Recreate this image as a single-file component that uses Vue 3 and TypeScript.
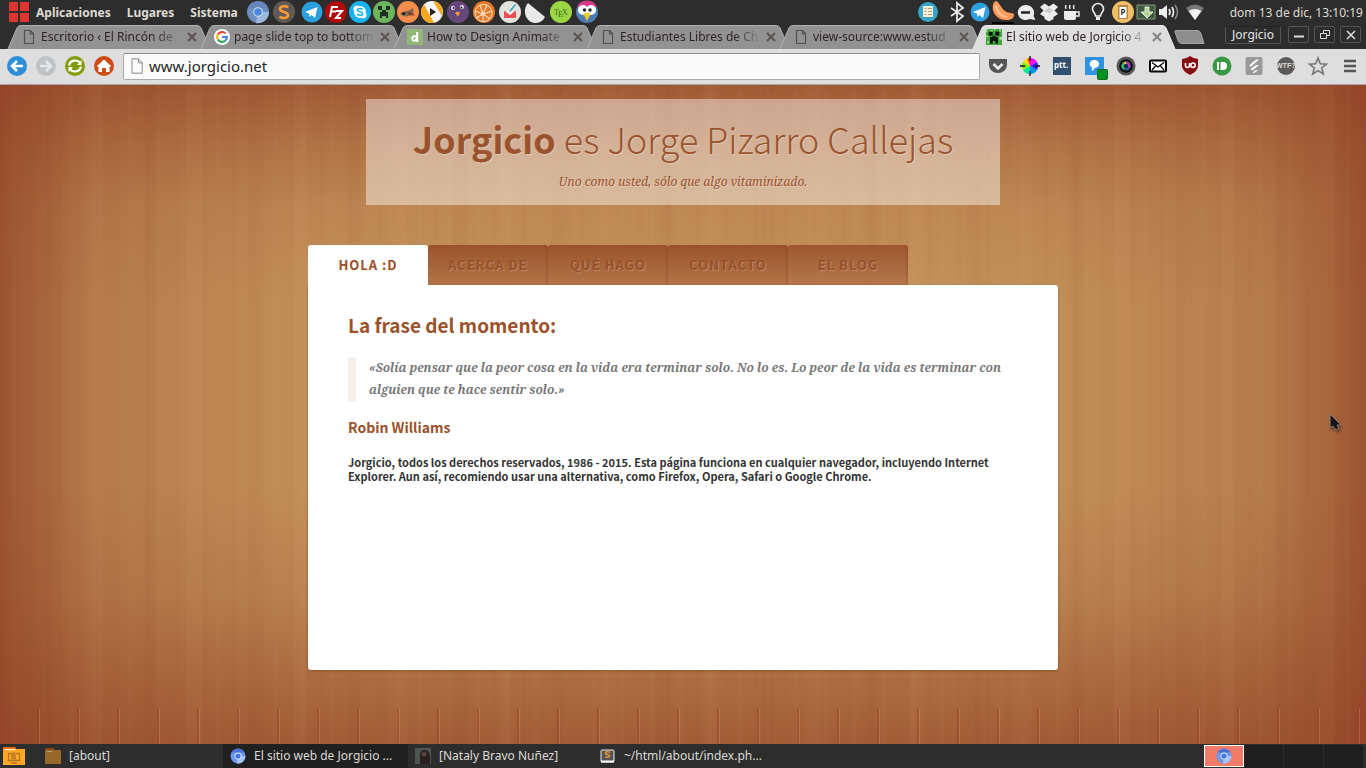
<script setup lang="ts">
import { ref } from 'vue'

interface BrowserTab {
  title: string
  icon: 'page' | 'google' | 'green' | 'creeper'
}

const tabs: BrowserTab[] = [
  { title: 'Escritorio ‹ El Rincón de', icon: 'page' },
  { title: 'page slide top to bottom', icon: 'google' },
  { title: 'How to Design Animate', icon: 'green' },
  { title: 'Estudiantes Libres de Ch', icon: 'page' },
  { title: 'view-source:www.estud', icon: 'page' },
  { title: 'El sitio web de Jorgicio 4', icon: 'creeper' },
]
const activeTab = ref(5)
const address = ref('www.jorgicio.net')

const sections = ['Hola :D', 'Acerca de', 'Qué hago', 'Contacto', 'El blog']
const activeSection = ref(0)

const creeperCells: [number, number, number, number][] = [
  [2, 2, 3, 3], [7, 2, 3, 3], [5, 5, 2, 3], [3, 6, 6, 3], [3, 9, 2, 2], [7, 9, 2, 2],
]
</script>

<template>
  <div class="desktop">
    <header class="panel-bar">
      <nav class="menus" aria-label="Sistema">
        <svg class="logo" viewBox="0 0 20 20"><path fill="#df3430" d="M0 0h9v9H0zM11 0h9v9h-9zM0 11h9v9H0zM11 11h9v9h-9z" /></svg>
        <button type="button">Aplicaciones</button>
        <button type="button">Lugares</button>
        <button type="button">Sistema</button>
      </nav>
      <div class="icons spaced first">
        <button type="button" aria-label="Chromium"><svg viewBox="0 0 24 24"><circle cx="12" cy="12" r="11" fill="#6d8fc0" /><path d="M12 12h11A11 11 0 0 1 10 23z" fill="#9db8de" /><path d="M2 8A11 11 0 0 1 22 8H12z" fill="#6486ba" /><circle cx="12" cy="12" r="4.800" fill="#d3e0f2" /><circle cx="12" cy="12" r="3.800" fill="#4a88dc" /></svg></button>
        <button type="button" aria-label="Sublime"><svg viewBox="0 0 24 24"><circle cx="12" cy="12" r="11" fill="#605a54" /><path d="M16 7.500C14 5.500 8 5.500 8 9s8 2.500 8 6-6 3.800-8.500 1.500" fill="none" stroke="#f79a35" stroke-width="2.600" /></svg></button>
      </div>
      <div class="icons">
        <button type="button" aria-label="Telegram"><svg viewBox="0 0 24 24"><circle cx="12" cy="12" r="10.500" fill="#2ba0dc" /><path d="M5 12 17.500 7 15 18l-3.500-3-2 2-.5-3.500z" fill="#fff" /></svg></button>
        <button type="button" aria-label="FileZilla"><svg viewBox="0 0 24 24"><circle cx="12" cy="12" r="11" fill="#b00a0a" /><path d="M6 17 8 7h6M7 11.500h5M12 11h6l-6 7h5" fill="none" stroke="#fff" stroke-width="2" /></svg></button>
        <button type="button" aria-label="Skype"><svg viewBox="0 0 24 24"><circle cx="12" cy="12" r="11" fill="#12b4ef" /><circle cx="12" cy="12" r="6" fill="#fff" /><circle cx="9" cy="9" r="3.500" fill="#fff" /><circle cx="15" cy="15" r="3.500" fill="#fff" /><path d="M14.500 9.500c-1-1.500-5-1.500-5 .6s5 1.400 5 3.600-4 2.200-5.300.3" fill="none" stroke="#12b4ef" stroke-width="1.600" /></svg></button>
        <button type="button" aria-label="Minecraft"><svg viewBox="0 0 24 24"><circle cx="12" cy="12" r="11" fill="#6ab55d" /><path d="M6 6h4v4H6zM14 6h4v4h-4zM10 10h4v2h2v6h-2v-2h-4v2H8v-6h2z" fill="#20301e" /></svg></button>
        <button type="button" aria-label="GIMP"><svg viewBox="0 0 24 24"><circle cx="12" cy="12" r="11" fill="#f48c4c" /><path d="M4 13c3 1 5-3 8-2l5-3c1 3 1 7-4 8-4 1-8 0-9-3z" fill="#7d6650" /><circle cx="7.500" cy="13.500" r="1.600" fill="#222" /><path d="m12 13 6 2" stroke="#8b2b12" stroke-width="1.500" /></svg></button>
        <button type="button" aria-label="Reproductor"><svg viewBox="0 0 24 24"><circle cx="12" cy="12" r="11" fill="#f6f6f6" /><path d="M4 4.500A11 11 0 0 0 14 22.800zM13 1a11 11 0 0 1 9 15z" fill="#f6a61b" /><path d="M10 8v8l6-4z" fill="#222" /></svg></button>
      </div>
      <div class="icons spaced third">
        <button type="button" aria-label="Pidgin"><svg viewBox="0 0 24 24"><circle cx="12" cy="12" r="11" fill="#65477c" /><circle cx="7" cy="8" r="2" fill="#eee" /><circle cx="16" cy="7" r="2" fill="#eee" /><circle cx="7.500" cy="8" r="1" fill="#222" /><circle cx="15.500" cy="7.500" r="1" fill="#222" /><path d="M9 13q3-3 5 0l-2 3.500z" fill="#f19a3e" /></svg></button>
        <button type="button" aria-label="Clementine"><svg viewBox="0 0 24 24"><circle cx="12" cy="12" r="11" fill="#e97825" /><circle cx="11.500" cy="13" r="8.600" fill="none" stroke="#f8e2cb" /><path d="m11 14-3-9m3 9 4-9m-4 9 9-3m-9 3 7 5m-7-5v8m0-8-7 4m7-4-8-3" stroke="#f8e2cb" stroke-width="1.200" /></svg></button>
        <button type="button" aria-label="Correo"><svg viewBox="0 0 24 24"><circle cx="12" cy="12" r="11" fill="#e3e2db" /><path d="M6 11h12v7H6z" fill="#ee4f55" /><path d="m7 11 5 4 5-4z" fill="#fff" /><path d="m11 13 1-3 5-6 1 1-5 6z" fill="#2a9acb" /></svg></button>
      </div>
      <div class="icons spaced">
        <button type="button" aria-label="Inkscape"><svg viewBox="0 0 24 24"><path d="M5 3 22 17a11 11 0 0 1-10 6C2 22-1 10 5 3z" fill="#e9e9e9" /></svg></button>
        <button type="button" aria-label="TeX"><svg viewBox="0 0 24 24"><circle cx="12" cy="12" r="11" fill="#9ad743" /><text x="5" y="15" font-size="8" fill="#41631c" font-family="Liberation Serif">T</text><text x="9" y="17" font-size="8" fill="#41631c" font-family="Liberation Serif">E</text><text x="13" y="15" font-size="8" fill="#41631c" font-family="Liberation Serif">X</text></svg></button>
        <button type="button" aria-label="Pájaro"><svg viewBox="0 0 24 24"><circle cx="12" cy="12" r="11" fill="#4a7db5" /><path d="M2 7a11 11 0 0 1 20 0z" fill="#d8398a" /><circle cx="8" cy="10" r="5" fill="#fff" /><circle cx="16" cy="10" r="5" fill="#fff" /><circle cx="9.500" cy="10" r="1.700" fill="#222" /><circle cx="15" cy="10" r="1.700" fill="#222" /><path d="M8.500 14q3.500-3 7 0L12 21z" fill="#f5cf1d" /></svg></button>
      </div>
      <div class="icons tray">
        <button type="button" class="first-tray" aria-label="Notas"><svg viewBox="0 0 24 24"><circle cx="12" cy="12" r="10" fill="#36a5c8" /><path d="M7 6h10v11H7z" fill="#f9f0dc" /><path d="M8.500 8.500h2m1.500 0h4m-7.500 3h2m1.500 0h4m-7.500 3h2m1.500 0h4" stroke="#c19b71" /></svg></button>
        <button type="button" aria-label="Bluetooth"><svg viewBox="0 0 24 24"><path d="m6 8 12 8-6 5V3l6 5-12 8" fill="none" stroke="#e8e8e8" stroke-width="1.800" /></svg></button>
        <button type="button" aria-label="Telegram"><svg viewBox="0 0 24 24"><circle cx="12" cy="12" r="9.500" fill="#2ba0dc" /><path d="M5 12 17.500 7 15 18l-3.500-3-2 2-.5-3.500z" fill="#fff" /></svg></button>
        <button type="button" aria-label="Clementine"><svg viewBox="0 0 24 24"><path d="M5 1c-2 0-4 4-3 9s6 10 13 10c5 0 8-2 8-5s-5-1-9-4S8 2 5 1z" fill="#ff9a5c" /><path d="M5 5c0 6 4 11 11 12" stroke="#ffc49d" stroke-width="2" fill="none" /><path d="M1 23h22" stroke="#000" stroke-width="2" /></svg></button>
        <button type="button" aria-label="Mensajes"><svg viewBox="0 0 24 24"><path d="M11.500 5a7.800 7.500 0 1 0 4 14l6 1-2-4a8 8 0 0 0-8-11z" fill="#ededed" /><path d="M7 12.500h9" stroke="#222" stroke-width="2.500" /></svg></button>
        <button type="button" aria-label="Dropbox"><svg viewBox="0 0 24 24"><path d="m7.500 3.500 4.500 3 4.500-3L21 7l-3.500 3.500L21 14l-4.500 3v2L12 21.500 7.500 19v-2L3 14l3.500-3.500L3 7z" fill="#ededed" /><path d="m7 10.500 5-3 5 3-5 3z" fill="#2d2d2d" opacity=".15" /></svg></button>
        <button type="button" aria-label="Cafeína"><svg viewBox="0 0 24 24"><path d="M4 11h12v7q0 2-2 2H6q-2 0-2-2z" fill="#ededed" /><path d="M16 12h3v4h-3M6 9q-1-2 0-4m4 4q-1-2 0-4m4 4q-1-2 0-4" stroke="#ededed" stroke-width="1.500" fill="none" /></svg></button>
        <button type="button" class="wide" aria-label="Bombilla"><svg viewBox="0 0 24 24"><path d="M9.500 16c0-3-3-4-3-7a5.500 5.500 0 0 1 11 0c0 3-3 4-3 7z" fill="none" stroke="#ededed" stroke-width="1.600" /><path d="M10 17h4v3h-4z" fill="#ededed" /></svg></button>
        <button type="button" aria-label="Portapapeles"><svg viewBox="0 0 24 24"><circle cx="12" cy="12" r="11" fill="#f0bf66" /><path d="M7 5h10v14H7z" fill="#b8864a" /><path d="M8.500 7h7v11h-7z" fill="#fff" /><text x="9.500" y="15" font-size="8" font-weight="bold" fill="#333" font-family="Noto Sans">P</text></svg></button>
        <button type="button" aria-label="Descargas"><svg viewBox="0 0 24 24"><path d="M3 5h18v14H3z" fill="#3c5a40" stroke="#87977f" /><path d="M11 7h4v5h4l-6 6-6-6h4z" fill="#b7d28e" stroke="#fff" stroke-width=".8" /></svg></button>
        <button type="button" aria-label="Volumen"><svg viewBox="0 0 24 24"><path d="M2 9h3l5-4v14l-5-4H2z" fill="#ededed" /><path d="M12 9q2 3 0 6M15 7q3 5 0 10" stroke="#ededed" stroke-width="1.700" fill="none" /><path d="M18 5q5 7 0 14" stroke="#888" stroke-width="1.500" fill="none" /></svg></button>
        <button type="button" class="wide" aria-label="Red"><svg viewBox="0 0 24 24"><path d="M3 8q9-7 18 0l-9 12z" fill="#777" /><path d="M5.500 11q6.500-4 13 0L12 20z" fill="#f2f2f2" /></svg></button>
      </div>
      <time class="clock">dom 13 de dic, 13:10:19</time>
    </header>

    <div class="tab-strip">
      <div class="tabs" role="tablist">
        <div v-for="(tab, i) in tabs" :key="tab.title" class="tab" :class="{ active: i === activeTab }">
          <svg class="tab-shape" viewBox="0 0 204 24" preserveAspectRatio="none"><path d="M0 24 9 3q1-2.500 4-2.500h177q3 0 4 2.500l9 21" /></svg>
          <button class="tab-main" type="button" role="tab" :aria-selected="i === activeTab" @click="activeTab = i">
            <svg v-if="tab.icon === 'page'" class="favicon" viewBox="0 0 16 16"><path d="M3.500 1.500h6l3 3v10h-9zM9.500 1.500v3.500h3" fill="none" stroke="#55504f" stroke-width="1.200" /></svg>
            <svg v-else-if="tab.icon === 'google'" class="favicon" viewBox="0 0 16 16"><circle cx="8" cy="8" r="8" fill="#fff" /><g fill="none" stroke-width="2.200"><path d="M11.500 4.300A5 5 0 0 0 3.800 5.500" stroke="#ea4335" /><path d="M3.800 5.500a5 5 0 0 0 0 5" stroke="#fbbc05" /><path d="M3.800 10.500a5 5 0 0 0 7.500 1.200" stroke="#34a853" /><path d="M11.300 11.700A5 5 0 0 0 13 8H8" stroke="#4285f4" /></g></svg>
            <svg v-else-if="tab.icon === 'green'" class="favicon" viewBox="0 0 16 16"><path d="M0 0h16v16H0z" fill="#92b878" /><circle cx="7.500" cy="9.500" r="2.200" fill="none" stroke="#fff" stroke-width="1.900" /><path d="M10.200 3v10" stroke="#fff" stroke-width="2" /></svg>
            <svg v-else class="favicon" viewBox="0 0 12 12"><path d="M0 0h12v12H0z" fill="#3fa83b" /><path d="M0 0h1v2H0zM3 1h2v1H3zM10 0h1v2h-1zM0 5h2v1H0zM10 6h2v2h-2zM1 9h1v2H1zM6 0h1v1H6z" fill="#a5e59a" /><rect v-for="c in creeperCells" :key="c.join()" :x="c[0]" :y="c[1]" :width="c[2]" :height="c[3]" fill="#0d160c" /></svg>
            <span class="tab-title">{{ tab.title }}</span>
          </button>
          <button class="tab-close" type="button" aria-label="Cerrar pestaña"><svg viewBox="0 0 10 10"><path d="m1 1 8 8M9 1 1 9" /></svg></button>
        </div>
        <button class="new-tab" type="button" aria-label="Nueva pestaña"><svg viewBox="0 0 30 14"><path d="M2 .5h21q3 0 4 3l3 10H8q-3 0-4-3L1 2Q.5.5 2 .5z" fill="#8e8e8e" stroke="#a5a5a5" /></svg></button>
      </div>
      <div class="window-controls">
        <button class="profile" type="button">Jorgicio</button>
        <button type="button" aria-label="Minimizar"><svg viewBox="0 0 18 14"><path d="M4 8.500h10" stroke-width="2" /></svg></button>
        <button type="button" aria-label="Restaurar"><svg viewBox="0 0 18 14"><path d="M4.500 5.500h6v5h-6zM7.500 5V2.500h6v5H11" /></svg></button>
        <button type="button" aria-label="Cerrar"><svg viewBox="0 0 18 14"><path d="m5 3 8 8M13 3l-8 8" stroke-width="1.500" /></svg></button>
      </div>
    </div>

    <div class="toolbar">
      <div class="nav-buttons">
        <button type="button" aria-label="Atrás"><svg viewBox="0 0 20 20"><circle cx="10" cy="10" r="10" fill="#2d8fd8" /><path d="M16 10H5m5-5-5 5 5 5" stroke="#fff" stroke-width="2.500" fill="none" /></svg></button>
        <button type="button" aria-label="Adelante"><svg viewBox="0 0 20 20"><circle cx="10" cy="10" r="10" fill="#bfc3c6" /><path d="M4 10h11m-5-5 5 5-5 5" stroke="#e6e6e6" stroke-width="2.500" fill="none" /></svg></button>
        <button type="button" aria-label="Recargar"><svg viewBox="0 0 20 20"><circle cx="10" cy="10" r="10" fill="#819d08" /><path d="M4 9.500c1-6 9-6.500 11.500-2M16 10.500c-1 6-9 6.500-11.500 2" stroke="#fff" stroke-width="2.200" fill="none" /><path d="M16.500 4v5H12zM3.500 16v-5H8z" fill="#fff" /></svg></button>
        <button type="button" aria-label="Inicio"><svg viewBox="0 0 20 20"><circle cx="10" cy="10" r="10" fill="#d04c17" /><path d="M2.500 10.500 10 3.500l7.500 7H15.500V16H12v-4H8v4H4.500v-5.500z" fill="#fff" /></svg></button>
      </div>
      <label class="omnibox">
        <svg viewBox="0 0 16 16"><path d="M3 .8h6.500l3.700 3.700v10.700H3zM9.500.8v4h3.700" fill="#fafafa" stroke="#8a8a8a" /></svg>
        <input v-model="address" type="text" aria-label="Dirección" spellcheck="false">
      </label>
      <div class="extensions">
        <button type="button" aria-label="Pocket"><svg viewBox="0 0 20 20"><path d="M1 3h18v6a9 8 0 0 1-18 0z" fill="#555" /><path d="m5.500 8 4.500 4.500L14.500 8" stroke="#eee" stroke-width="2.600" fill="none" /></svg></button>
        <button type="button" aria-label="Selector de color"><svg viewBox="0 0 20 20"><path d="M10 10V2a8 8 0 0 1 7 4z" fill="#f0f" /><path d="m10 10 7-4a8 8 0 0 1 0 8z" fill="#4020ff" /><path d="m10 10 7 4a8 8 0 0 1-7 4z" fill="#0094ff" /><path d="M10 10v8a8 8 0 0 1-7-4z" fill="#00e8a0" /><path d="m10 10-7 4a8 8 0 0 1 0-8z" fill="#80f000" /><path d="M10 10 3 6a8 8 0 0 1 4-3.500z" fill="#ffdf00" /><path d="M10 10 7 2.500q1-.5 3-.5z" fill="#ff4a00" /><path d="M10 0v5M10 15v5M0 10h5m10 0h5" stroke="#111" stroke-width="1.300" /></svg></button>
        <button type="button" aria-label="ptt"><svg viewBox="0 0 20 20"><path d="M1 1h18v18H1z" fill="#31506f" /><text x="2" y="12" font-size="8" font-weight="bold" fill="#fff" font-family="Noto Sans">ptt.</text></svg></button>
        <button type="button" aria-label="Chat"><svg viewBox="0 0 20 20"><path d="M1 1h19v18H1z" fill="#2f92e2" /><path d="M10 4a4.500 4 0 0 1 1 8q-2 .5-2 3.500-2-1.500-1-4A4.500 4 0 0 1 10 4z" fill="#fff" /><rect x="13.500" y="13.500" width="10" height="10" rx="1" fill="#079122" stroke="#056b18" /></svg></button>
        <button type="button" aria-label="Cámara"><svg viewBox="0 0 20 20"><circle cx="10" cy="10" r="9.500" fill="#57565a" /><circle cx="10" cy="10" r="6.800" fill="#111" /><circle cx="10" cy="10" r="4.500" fill="#2b5e91" /><path d="M10 10V5.500A4.500 4.500 0 0 1 14 12z" fill="#b33bc2" /><path d="M10 10 7 6.500 10 5.500z" fill="#e3c830" /><path d="M10 10 7 6.500a4.500 4.500 0 0 0 0 7z" fill="#2ebd63" /><circle cx="10" cy="10" r="2" fill="#142239" /></svg></button>
        <button type="button" aria-label="Correo"><svg viewBox="0 0 20 20"><rect x="2" y="4.500" width="16" height="11" rx="1" fill="#fff" stroke="#000" stroke-width="2" /><path d="m4 6.500 6 4.500 6-4.500M4 14l3.500-4m8.500 4-3.500-4" stroke="#000" stroke-width="1.300" fill="none" /></svg></button>
        <button type="button" aria-label="uBlock"><svg viewBox="0 0 20 20"><path d="M10 0q4 3 8 3v7q0 5-8 9-8-4-8-9V3q4 0 8-3z" fill="#850c12" /><path d="M5.500 7v2.500q0 2 2 2t2-2V7" stroke="#fff" stroke-width="1.600" fill="none" /><circle cx="13" cy="9.200" r="2.200" stroke="#fff" stroke-width="1.600" fill="none" /></svg></button>
        <button type="button" aria-label="Pushbullet"><svg viewBox="0 0 20 20"><circle cx="10" cy="10" r="9.500" fill="#389843" /><path d="M5 6h2v8H5zM8.500 6H11a4 4 0 0 1 0 8H8.500z" fill="#fff" /></svg></button>
        <button type="button" aria-label="Feedly"><svg viewBox="0 0 20 20"><rect x="1.500" y="1" width="17" height="18" rx="2" fill="#999" /><path d="m5.500 9 6.500-5.500h3L6.500 11zM6.500 13l5.500-4h3l-6.500 5.500zM8.500 16.500l3.500-2.500h2l-3.500 3z" fill="#fff" /></svg></button>
        <button type="button" aria-label="WTF"><svg viewBox="0 0 20 20"><circle cx="10" cy="10" r="9" fill="#5a5a5a" /><text x="0" y="12" font-size="7" font-weight="bold" fill="#ddd" font-family="Liberation Sans">WTF?</text></svg></button>
        <button type="button" aria-label="Marcador"><svg viewBox="0 0 20 20"><path d="m10 2 2.300 5.700 6.200.4-4.800 3.900 1.600 6L10 14.600 4.700 18l1.600-6-4.800-3.900 6.200-.4z" fill="none" stroke="#777" stroke-width="1.600" /></svg></button>
        <button type="button" aria-label="Menú"><svg viewBox="0 0 20 20"><path d="M4 5h12M4 10h12M4 15h12" stroke="#555" stroke-width="2.600" /></svg></button>
      </div>
    </div>

    <main class="site">
      <header class="site-header">
        <h1><strong>Jorgicio</strong> es Jorge Pizarro Callejas</h1>
        <p>Uno como usted, sólo que algo vitaminizado.</p>
      </header>
      <div class="site-body">
        <nav class="site-nav">
          <a v-for="(name, i) in sections" :key="name" href="#" :class="{ active: i === activeSection, last: i === sections.length - 1 }" @click.prevent="activeSection = i">{{ name }}</a>
        </nav>
        <article class="card">
          <h2>La frase del momento:</h2>
          <blockquote>«Solía pensar que la peor cosa en la vida era terminar solo. No lo es. Lo peor de la vida es terminar con alguien que te hace sentir solo.»</blockquote>
          <h3>Robin Williams</h3>
          <p class="rights">Jorgicio, todos los derechos reservados, 1986 - 2015. Esta página funciona en cualquier navegador, incluyendo Internet Explorer. Aun así, recomiendo usar una alternativa, como Firefox, Opera, Safari o Google Chrome.</p>
        </article>
      </div>
      <svg class="cursor" viewBox="0 0 16 20"><path d="M2 1v14l3-2 3 4 3-1.500-2-3.500h4z" fill="#151515" stroke="#8d8378" /></svg>
    </main>

    <footer class="taskbar">
      <button class="show-desktop" type="button" aria-label="Escritorio"><svg viewBox="0 0 22 18"><path d="M0 0h12l1 2h9v16H0z" fill="#ffa726" /><path d="M0 0h12l1 2H0z" fill="#ef6c00" /><path d="M2 2.500h10" stroke="#fff" /><path d="M5.500 6.500h11v7h-11zM8 16h6M9 8.500h3v3H9z" fill="none" stroke="#b5751e" stroke-width="1.300" /></svg></button>
      <button class="task" type="button"><svg viewBox="0 0 16 16"><path d="M0 0h9v2h7v14H0z" fill="#97682a" /><path d="M0 0h9v2H0z" fill="#8c4310" /><path d="M2 3.500h5" stroke="#b9a182" /></svg>[about]</button>
      <button class="task current" type="button"><svg viewBox="0 0 16 16"><circle cx="8" cy="8" r="7.500" fill="#6a96ee" /><path d="M1.500 4.500a7.500 7.500 0 0 1 13 0H8z" fill="#4872d3" /><path d="M8 8h7.500A7.500 7.500 0 0 1 7 15.500z" fill="#a8c4f8" /><circle cx="8" cy="8" r="3.500" fill="#dce8ff" /><circle cx="8" cy="8" r="2.600" fill="#3f78e4" /></svg>El sitio web de Jorgicio ...</button>
      <button class="task" type="button"><svg viewBox="0 0 16 16"><path d="M0 0h16v16H0z" fill="#4d5454" /><path d="M5 16V6q1-5 6-4 5 1 4 14z" fill="#291f20" /><circle cx="9" cy="6" r="2.500" fill="#5b4039" /></svg>[Nataly Bravo Nuñez]</button>
      <button class="task" type="button"><svg viewBox="0 0 16 16"><rect x="1" y="2" width="13" height="12" rx="1" fill="#555" stroke="#eee" /><path d="M1 13.500h13" stroke="#fff" stroke-width="2" /><path d="M10 4.500c-2-1.500-5-.8-4.500 1 .3 1.300 4 .7 4 2.300S7 9.800 5.300 8.800" stroke="#f3922c" stroke-width="1.500" fill="none" /></svg>~/html/about/index.ph...</button>
      <div class="workspaces">
        <button class="on" type="button" aria-label="Espacio 1"><svg viewBox="0 0 16 16"><circle cx="8" cy="8" r="7.500" fill="#6a96ee" /><path d="M1.500 4.500a7.500 7.500 0 0 1 13 0H8z" fill="#4872d3" /><path d="M8 8h7.500A7.500 7.500 0 0 1 7 15.500z" fill="#a8c4f8" /><circle cx="8" cy="8" r="3.500" fill="#dce8ff" /><circle cx="8" cy="8" r="2.600" fill="#3f78e4" /></svg></button>
        <button type="button" aria-label="Espacio 2"></button>
        <button type="button" aria-label="Espacio 3"></button>
        <button type="button" aria-label="Espacio 4"></button>
      </div>
    </footer>
  </div>
</template>

<style>
body {
  margin: 0;
}
</style>

<style scoped>
* {
  box-sizing: border-box;
}
.desktop {
  display: flex;
  flex-direction: column;
  height: 100vh;
  overflow: hidden;
  background: #2d2d2d;
  font-family: "Noto Sans", "Open Sans", sans-serif;
  font-size: 12px;
}
button {
  margin: 0;
  padding: 0;
  border: 0;
  background: none;
  color: inherit;
  font: inherit;
  white-space: nowrap;
}
svg {
  display: block;
  flex: none;
  overflow: visible;
}

.panel-bar {
  display: flex;
  flex: none;
  align-items: center;
  height: 24px;
  color: #dfdbd2;
}
.menus {
  display: flex;
  align-items: center;
  gap: 16px;
  padding-left: 9px;
  font-weight: bold;
}
.logo {
  width: 20px;
  height: 20px;
  margin-right: -9px;
}
.icons {
  display: flex;
}
.icons button {
  width: 24px;
  height: 24px;
}
.icons svg {
  width: 24px;
  height: 24px;
}
.icons.spaced {
  gap: 2px;
}
.icons.first {
  margin: 0 4px 0 8px;
}
.icons.third {
  margin: 0 1px 0 2px;
}
.icons.tray {
  margin-right: 21px;
  margin-left: auto;
}
.icons.tray button {
  display: flex;
  justify-content: center;
  width: 23px;
}
.icons.tray .wide {
  width: 28px;
}
.icons.tray .first-tray {
  width: 36px;
}
.clock {
  padding-right: 3px;
}

.tab-strip {
  display: flex;
  flex: none;
  justify-content: space-between;
  height: 25px;
  color: #e4e4e4;
}
.tabs {
  display: flex;
  flex: 1;
  min-width: 0;
  padding-left: 12px;
}
.tab {
  position: relative;
  display: flex;
  flex: 0 1 193px;
  align-items: center;
  min-width: 0;
  padding: 0 4px 0 9px;
  color: #2e2423;
}
.tab-shape {
  position: absolute;
  top: 1px;
  left: -4px;
  width: calc(100% + 10px);
  height: 24px;
  fill: #929292;
  stroke: #b2b2b2;
}
.tab.active .tab-shape {
  fill: #dedede;
  stroke: #ececec;
}
.tab-main {
  position: relative;
  display: flex;
  flex: 1;
  align-items: center;
  gap: 4px;
  min-width: 0;
}
.favicon {
  width: 16px;
  height: 16px;
}
.tab-title {
  flex: 1;
  min-width: 0;
  overflow: hidden;
  text-align: left;
  mask-image: linear-gradient(to right, #000 calc(100% - 28px), transparent);
}
.tab-close {
  position: relative;
  padding: 4px;
}
.tab-close svg {
  width: 10px;
  height: 10px;
  stroke: #5c5351;
  stroke-width: 2;
}
.tab.active .tab-close svg {
  stroke: #838383;
}
.new-tab {
  padding-left: 4px;
}
.new-tab svg {
  width: 30px;
  height: 14px;
}
.window-controls {
  display: flex;
  align-items: center;
  gap: 5px;
  padding: 0 5px 4px 0;
}
.window-controls button {
  display: flex;
  align-items: center;
  justify-content: center;
  width: 21px;
  height: 17px;
  border: 1px solid #555;
  border-radius: 2px;
}
.window-controls svg {
  width: 18px;
  height: 14px;
  fill: none;
  stroke: #ddd;
}
.window-controls .profile {
  width: 56px;
  height: 18px;
  margin-right: 2px;
  border-top-color: #222;
}

.toolbar {
  display: flex;
  flex: none;
  align-items: center;
  height: 36px;
  padding-bottom: 1px;
  border-bottom: 1px solid #a6a6a6;
  background: #dedede;
}
.nav-buttons {
  display: flex;
  gap: 9px;
  padding: 0 9px 0 7px;
}
.nav-buttons svg {
  width: 20px;
  height: 20px;
}
.omnibox {
  display: flex;
  flex: 1;
  align-items: center;
  gap: 4px;
  height: 27px;
  padding-left: 5px;
  border: 1px solid #aaa;
  border-top-color: #8e8e8e;
  border-radius: 2px;
  background: #fafafa;
}
.omnibox svg {
  width: 16px;
  height: 16px;
}
.omnibox input {
  flex: 1;
  min-width: 0;
  padding: 0;
  border: 0;
  outline: 0;
  background: none;
  color: #252525;
  font: 15px "Noto Sans", sans-serif;
}
.extensions {
  display: flex;
  padding-left: 2px;
}
.extensions button {
  display: flex;
  justify-content: center;
  width: 32px;
}
.extensions svg {
  width: 20px;
  height: 20px;
}

.site {
  position: relative;
  display: flex;
  flex: 1;
  flex-direction: column;
  align-items: center;
  min-height: 0;
  padding: 14px 0 74px;
  background: #c4925a;
  background-image:
    repeating-linear-gradient(90deg, rgba(90, 30, 0, .02) 0 3px, transparent 5px 11px, rgba(255, 220, 190, .02) 13px 15px, transparent 17px 29px),
    repeating-linear-gradient(90deg, transparent 0 37px, rgba(110, 40, 10, .04) 43px 51px, transparent 57px 83px, rgba(255, 190, 150, .04) 89px 97px, transparent 103px),
    linear-gradient(to bottom, rgba(143, 62, 34, .66), rgba(143, 62, 34, .34) 60px, rgba(143, 62, 34, .12) 120px, transparent 220px),
    linear-gradient(to top, rgba(143, 62, 34, .64), rgba(143, 62, 34, .42) 70px, rgba(143, 62, 34, .16) 150px, transparent 260px),
    linear-gradient(to right, rgba(143, 62, 34, .74), rgba(143, 62, 34, .54) 40px, rgba(143, 62, 34, .3) 90px, rgba(143, 62, 34, .17) 180px, rgba(143, 62, 34, .05) 300px, transparent 420px),
    linear-gradient(to left, rgba(143, 62, 34, .74), rgba(143, 62, 34, .54) 40px, rgba(143, 62, 34, .3) 90px, rgba(143, 62, 34, .17) 180px, rgba(143, 62, 34, .05) 300px, transparent 420px);
}
.site::after {
  position: absolute;
  right: 0;
  bottom: 0;
  left: 0;
  height: 35px;
  background: repeating-linear-gradient(90deg, transparent 0 37px, rgba(145, 55, 25, .3) 37px 39px, rgba(210, 150, 110, .35) 39px 40px);
  content: "";
}
.site-header {
  width: 100%;
  max-width: 634px;
  height: 106px;
  margin-bottom: 40px;
  padding-top: 16px;
  background: rgba(255, 255, 255, .43);
  color: #9a532c;
  text-align: center;
  text-shadow: 1px 1px 0 rgba(255, 255, 255, .3);
}
h1,
h2,
h3,
.site-nav,
.rights {
  font-family: "Source Sans Pro", "Noto Sans CJK JP", sans-serif;
}
h1 {
  margin: 0;
  font-size: 36px;
  font-weight: 200;
  line-height: 46px;
}
h1 strong {
  font-weight: 700;
}
.site-header p {
  margin: 10px 0 0;
  font: italic 12px/22px "Droid Serif", "Noto Serif", "DejaVu Serif Condensed", "DejaVu Serif", serif;
}
.site-body {
  display: flex;
  flex: 1;
  flex-direction: column;
  width: 100%;
  max-width: 750px;
  min-height: 0;
}
.site-nav {
  position: relative;
  z-index: 1;
  display: flex;
}
.site-nav a {
  width: 120px;
  height: 40px;
  border-radius: 3px 3px 0 0;
  background: linear-gradient(#9b532b, #b17547);
  box-shadow: inset -2px 0 2px rgba(120, 50, 20, .2);
  color: #98502c;
  font-size: 13px;
  font-weight: 700;
  letter-spacing: 1px;
  line-height: 40px;
  text-align: center;
  text-decoration: none;
  text-shadow: 1px 1px 1px rgba(255, 220, 190, .3);
  text-transform: uppercase;
}
.site-nav .active {
  background: #fff;
  box-shadow: none;
}
.site-nav .last {
  background: linear-gradient(rgba(150, 75, 40, .8), rgba(170, 105, 65, .6));
}
.card {
  flex: 1;
  padding: 24px 40px;
  border-radius: 0 3px 3px 3px;
  background: #fff;
  box-shadow: 0 1px 3px rgba(90, 40, 10, .4);
}
h2,
h3 {
  margin: 0;
  color: #9b522b;
  font-weight: 700;
}
h2 {
  font-size: 19px;
  line-height: 32px;
}
h3 {
  font-size: 14px;
  line-height: 24px;
}
blockquote {
  margin: 16px 0 14px;
  padding-left: 13px;
  border-left: 8px solid #f6eeeb;
  color: #777;
  font: italic bold 12px/22px "Droid Serif", "Noto Serif", "DejaVu Serif Condensed", "DejaVu Serif", serif;
}
.rights {
  margin: 16px 0 0;
  color: #333;
  font-size: 11px;
  font-weight: 700;
  line-height: 14px;
}
.cursor {
  position: absolute;
  top: 328px;
  right: 22px;
  width: 16px;
  height: 20px;
  filter: drop-shadow(1px 2px 1px rgba(0, 0, 0, .4));
}

.taskbar {
  display: flex;
  flex: none;
  height: 24px;
  color: #dcdad5;
}
.show-desktop {
  width: 38px;
  padding-left: 3px;
}
.show-desktop svg {
  width: 22px;
  height: 18px;
}
.task {
  display: flex;
  flex: 0 1 185px;
  align-items: center;
  gap: 8px;
  min-width: 0;
  padding-bottom: 1px;
  padding-left: 7px;
  overflow: hidden;
}
.task.current {
  background: #202020;
}
.task svg {
  width: 16px;
  height: 16px;
}
.workspaces {
  display: flex;
  margin-left: auto;
  padding: 1px 2px 0 0;
}
.workspaces button {
  display: flex;
  align-items: center;
  justify-content: center;
  width: 40px;
  height: 23px;
  border-right: 1px solid #2d2d2d;
  background: #1f1f1f;
}
.workspaces .on {
  height: 22px;
  border: 1px solid #fff;
  background: #f47b6a;
}
.workspaces svg {
  width: 16px;
  height: 16px;
}
</style>
